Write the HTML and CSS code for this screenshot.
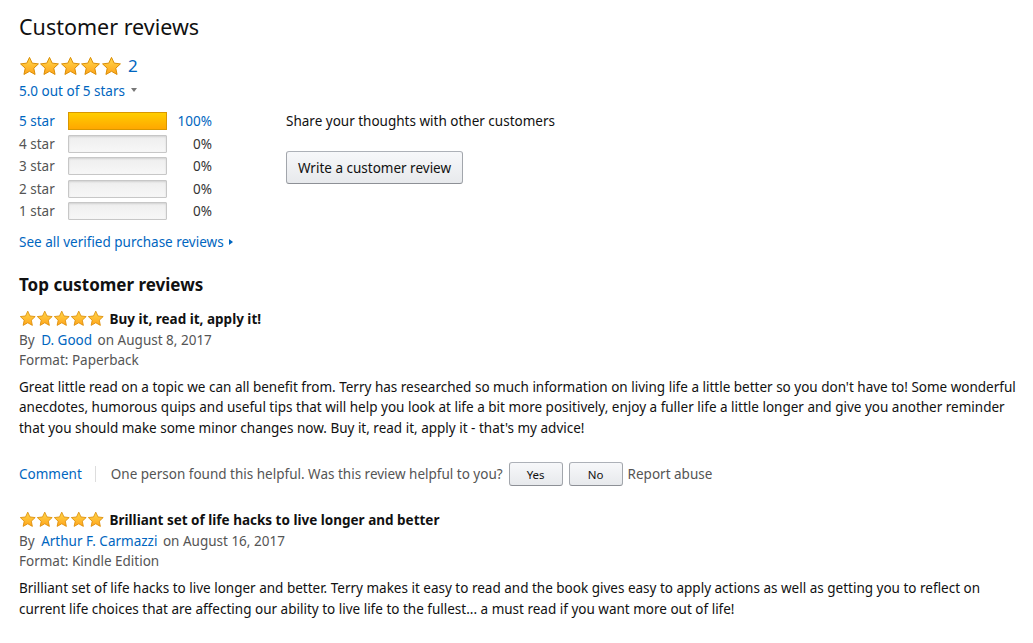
FILE: index.html
```html
<!DOCTYPE html>
<html>
<head>
<meta charset="utf-8">
<link rel="stylesheet" href="styles.css">
</head>
<body>
<svg width="0" height="0" class="defs">
  <defs>
    <linearGradient id="sg" x1="0" y1="0" x2="0" y2="1">
      <stop offset="0" stop-color="#ffd84a"/>
      <stop offset="1" stop-color="#ffa41c"/>
    </linearGradient>
    <symbol id="star" viewBox="0 0 24 24">
      <path d="M12 1.6l3.05 6.55 7.15.85-5.3 4.95 1.45 7.15L12 17.55 5.65 21.1l1.45-7.15L1.8 9l7.15-.85z" fill="url(#sg)" stroke="#d98a00" stroke-width="1.1" stroke-linejoin="round"/>
    </symbol>
  </defs>
</svg>
<div class="page">
  <h2 class="title">Customer reviews</h2>
  <div class="summary">
    <span class="stars big">
      <svg><use href="#star"/></svg><svg><use href="#star"/></svg><svg><use href="#star"/></svg><svg><use href="#star"/></svg><svg><use href="#star"/></svg>
    </span>
    <a class="count">2</a>
  </div>
  <div class="outof"><a>5.0 out of 5 stars</a><span class="caret"></span></div>

  <div class="hist-wrap">
    <div class="hist">
      <div class="row"><a class="lbl link">5 star</a><div class="bar"><div class="fill" style="width:100%"></div></div><a class="pct link">100%</a></div>
      <div class="row"><span class="lbl">4 star</span><div class="bar"></div><span class="pct">0%</span></div>
      <div class="row"><span class="lbl">3 star</span><div class="bar"></div><span class="pct">0%</span></div>
      <div class="row"><span class="lbl">2 star</span><div class="bar"></div><span class="pct">0%</span></div>
      <div class="row"><span class="lbl">1 star</span><div class="bar"></div><span class="pct">0%</span></div>
      <a class="seeall">See all verified purchase reviews<span class="rcaret"></span></a>
    </div>
    <div class="share">
      <div class="share-txt">Share your thoughts with other customers</div>
      <button class="btn">Write a customer review</button>
    </div>
  </div>

  <h3 class="subtitle">Top customer reviews</h3>

  <div class="review">
    <div class="rhead">
      <span class="stars small"><svg><use href="#star"/></svg><svg><use href="#star"/></svg><svg><use href="#star"/></svg><svg><use href="#star"/></svg><svg><use href="#star"/></svg></span>
      <span class="rtitle">Buy it, read it, apply it!</span>
    </div>
    <div class="meta">By <a class="author">D. Good</a> on August 8, 2017</div>
    <div class="meta">Format: Paperback</div>
    <p class="body">Great little read on a topic we can all benefit from. Terry has researched so much information on living life a little better so you don't have to! Some wonderful anecdotes, humorous quips and useful tips that will help you look at life a bit more positively, enjoy a fuller life a little longer and give you another reminder that you should make some minor changes now. Buy it, read it, apply it - that's my advice!</p>
    <div class="actions">
      <a class="comment">Comment</a>
      <span class="sep"></span>
      <span class="helpful">One person found this helpful. Was this review helpful to you?</span>
      <button class="sbtn">Yes</button>
      <button class="sbtn">No</button>
      <span class="report">Report abuse</span>
    </div>
  </div>

  <div class="review second">
    <div class="rhead">
      <span class="stars small"><svg><use href="#star"/></svg><svg><use href="#star"/></svg><svg><use href="#star"/></svg><svg><use href="#star"/></svg><svg><use href="#star"/></svg></span>
      <span class="rtitle">Brilliant set of life hacks to live longer and better</span>
    </div>
    <div class="meta">By <a class="author">Arthur F. Carmazzi</a> on August 16, 2017</div>
    <div class="meta">Format: Kindle Edition</div>
    <p class="body">Brilliant set of life hacks to live longer and better. Terry makes it easy to read and the book gives easy to apply actions as well as getting you to reflect on current life choices that are affecting our ability to live life to the fullest... a must read if you want more out of life!</p>
  </div>
</div>
</body>
</html>
```

FILE: styles.css
```css
html, body {
  margin: 0;
  padding: 0;
  background: #fff;
}
body {
  font-family: "Noto Sans", "Open Sans", Arial, sans-serif;
  font-size: 13.5px;
  color: #111;
}
.defs {
  position: absolute;
  width: 0;
  height: 0;
}
.page {
  padding: 13px 6px 0 19px;
}
a {
  color: #0066c0;
  text-decoration: none;
}
.title {
  margin: 0;
  font-size: 21.5px;
  line-height: 28px;
  font-weight: 400;
  color: #111;
}
.summary {
  display: flex;
  align-items: center;
  margin-top: 14px;
  height: 22px;
}
.stars {
  display: inline-flex;
}
.stars svg {
  display: block;
}
.stars.big svg {
  width: 21px;
  height: 21px;
  margin-right: -0.6px;
}
.stars.small svg {
  width: 17.5px;
  height: 17.5px;
  margin-right: -0.4px;
}
.count {
  font-size: 17px;
  margin-left: 7px;
  line-height: 22px;
}
.outof {
  display: flex;
  align-items: center;
  margin-top: 4px;
  line-height: 20px;
}
.caret {
  margin-left: 6px;
  width: 0;
  height: 0;
  border-left: 3.5px solid transparent;
  border-right: 3.5px solid transparent;
  border-top: 4px solid #777;
  margin-top: -3px;
}
.hist-wrap {
  display: flex;
  margin-top: 9px;
}
.hist {
  width: 193px;
  display: flex;
  flex-direction: column;
}
.row {
  display: flex;
  align-items: center;
  height: 22.5px;
}
.lbl {
  width: 49px;
  color: #555;
}
.lbl.link {
  color: #0066c0;
}
.bar {
  width: 97px;
  height: 16px;
  border: 1px solid #c7c7c7;
  border-radius: 1px;
  background: linear-gradient(#eeeeee, #f7f7f7);
  box-shadow: inset 0 1px 2px rgba(0,0,0,0.12);
}
.fill {
  height: 100%;
  background: linear-gradient(#ffce00, #ffa700);
  box-shadow: 0 0 0 1px #d99700;
}
.pct {
  flex: 1;
  text-align: right;
  color: #333;
}
.pct.link {
  color: #0066c0;
}
.seeall {
  margin-top: 9px;
  display: flex;
  align-items: center;
  white-space: nowrap;
  line-height: 20px;
}
.rcaret {
  margin-left: 5px;
  width: 0;
  height: 0;
  border-top: 3.5px solid transparent;
  border-bottom: 3.5px solid transparent;
  border-left: 4px solid #0066c0;
}
.share {
  margin-left: 74px;
}
.share-txt {
  line-height: 22px;
}
.btn {
  margin-top: 19px;
  width: 177px;
  height: 33px;
  font-family: inherit;
  font-size: 13.5px;
  color: #111;
  background: linear-gradient(#f7f8fa, #e7e9ec);
  border: 1px solid;
  border-color: #adb1b8 #a2a6ac #8d9096;
  border-radius: 3px;
  padding: 0;
}
.subtitle {
  margin: 21px 0 0;
  font-size: 17px;
  line-height: 24px;
  font-weight: 700;
}
.review {
  margin-top: 11px;
}
.review.second {
  margin-top: 23px;
}
.rhead {
  display: flex;
  align-items: center;
  height: 22px;
}
.rtitle {
  font-weight: 700;
  margin-left: 5px;
}
.meta {
  color: #555;
  line-height: 20px;
}
.author {
  margin: 0 2px 0 3px;
}
.body {
  margin: 7px 0 0;
  line-height: 20.5px;
}
.actions {
  display: flex;
  align-items: center;
  margin-top: 24px;
  height: 24px;
  color: #555;
}
.comment {
  margin-right: 13px;
}
.sep {
  width: 1px;
  height: 16px;
  background: #ddd;
  margin-right: 15px;
}
.helpful {
  margin-right: 6px;
}
.sbtn {
  width: 54px;
  height: 24px;
  margin-right: 6px;
  font-family: inherit;
  font-size: 11.5px;
  color: #111;
  background: linear-gradient(#f7f8fa, #e7e9ec);
  border: 1px solid;
  border-color: #adb1b8 #a2a6ac #8d9096;
  border-radius: 3px;
  padding: 0;
}
.report {
  margin-left: -1px;
}
```
